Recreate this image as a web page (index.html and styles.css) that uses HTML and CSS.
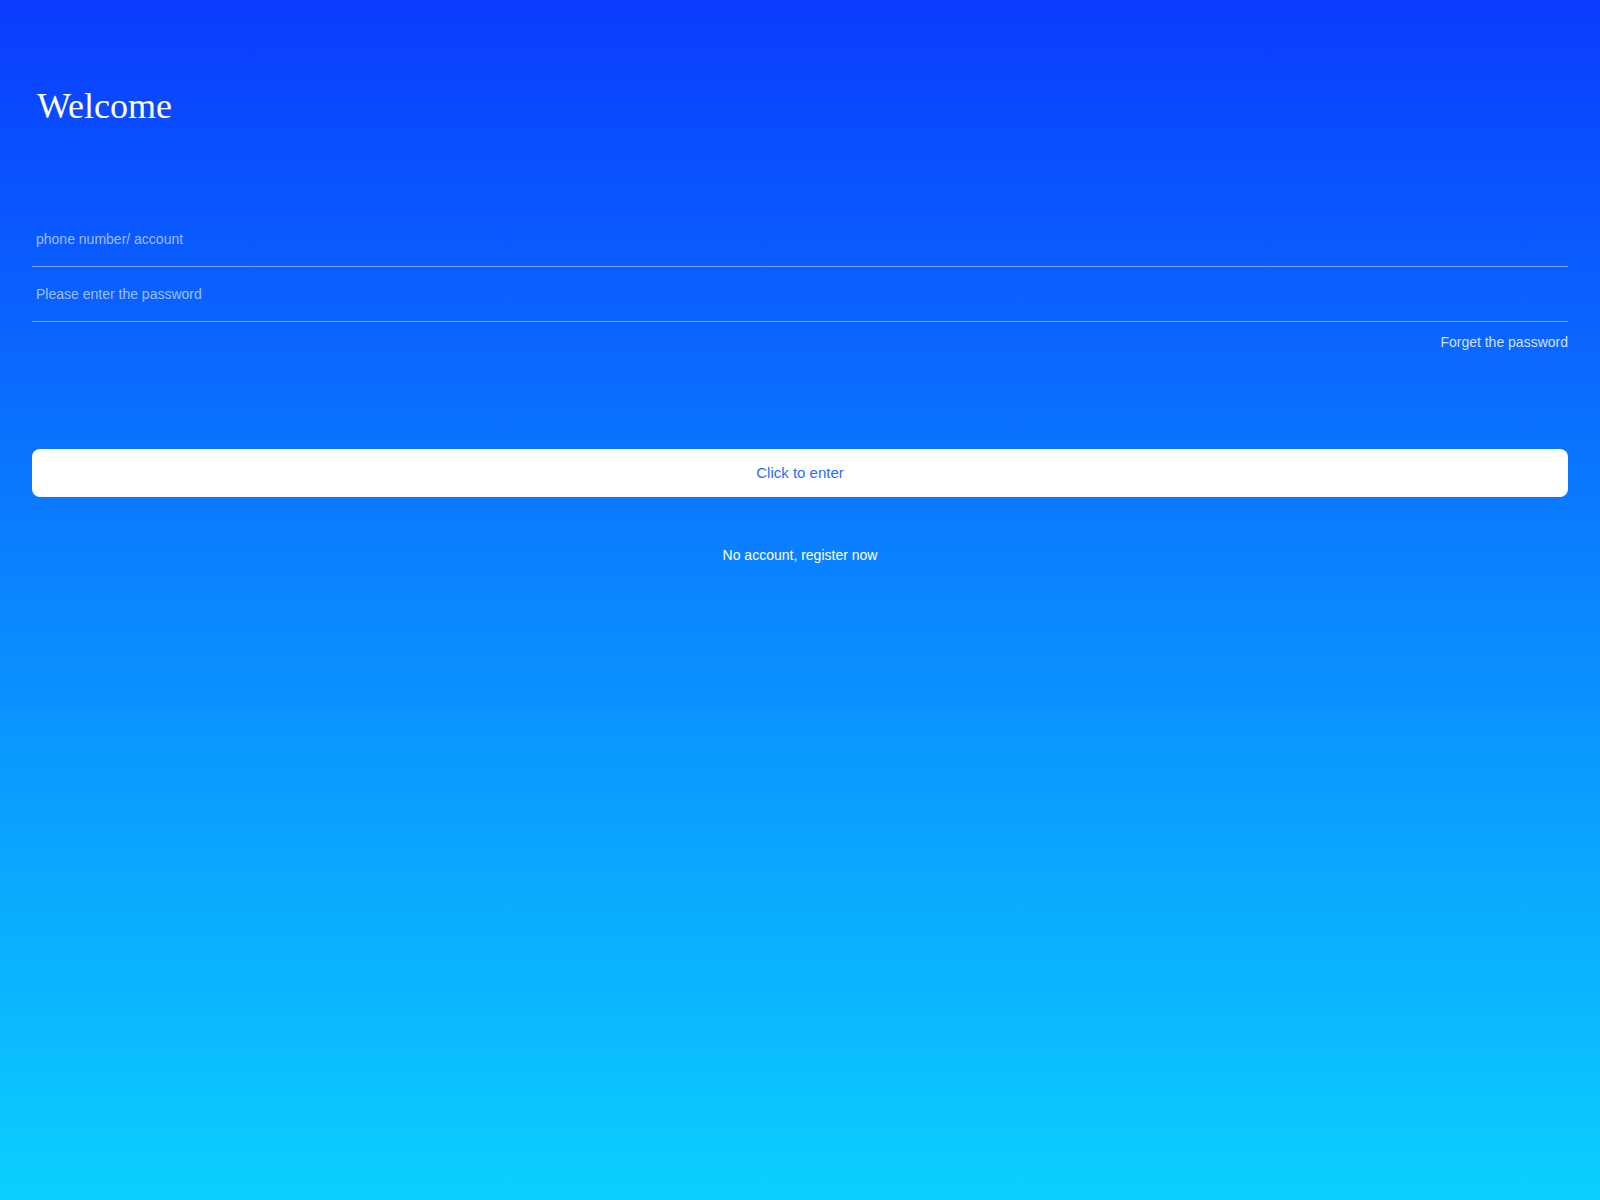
FILE: index.html
```html
<!DOCTYPE html>
<html lang="en">
<head>
<meta charset="utf-8">
<title>Welcome</title>
<link rel="stylesheet" href="styles.css">
</head>
<body>
<main class="page">
  <h1 class="title">Welcome</h1>
  <form class="form">
    <input class="field" type="text" placeholder="phone number/ account">
    <input class="field" type="password" placeholder="Please enter the password">
    <div class="forget-row"><a class="forget">Forget the password</a></div>
    <button class="enter" type="button">Click to enter</button>
    <div class="register"><a class="register-link">No account, register now</a></div>
  </form>
</main>
</body>
</html>
```

FILE: styles.css
```css
html, body {
  margin: 0;
  padding: 0;
  height: 100%;
}
body {
  background: linear-gradient(180deg, #0a3cff 0%, #0bd0ff 100%);
  min-height: 1200px;
  font-family: "Liberation Sans", Arial, sans-serif;
  font-size: 14px;
}
.page {
  padding: 86px 32px 0;
}
.title {
  margin: 0;
  padding-left: 5px;
  font-family: "Liberation Serif", "Times New Roman", serif;
  font-weight: normal;
  font-size: 36px;
  line-height: 40px;
  color: #ffffff;
}
.form {
  display: flex;
  flex-direction: column;
  margin-top: 86px;
}
.field {
  display: block;
  box-sizing: border-box;
  width: 100%;
  height: 55px;
  margin: 0;
  padding: 0 4px;
  border: 0;
  border-bottom: 1px solid rgba(255, 255, 255, 0.45);
  background: transparent;
  outline: none;
  font-family: "Liberation Sans", Arial, sans-serif;
  font-size: 14px;
  color: #ffffff;
}
.field::placeholder {
  color: rgba(255, 255, 255, 0.6);
}
.forget-row {
  display: flex;
  justify-content: flex-end;
  margin-top: 10px;
}
.forget {
  font-size: 14px;
  line-height: 20px;
  color: rgba(255, 255, 255, 0.82);
}
.enter {
  display: block;
  box-sizing: border-box;
  width: 100%;
  height: 48px;
  margin-top: 97px;
  padding: 0 0 2px;
  border: 0;
  border-radius: 8px;
  background: #ffffff;
  color: #2a6cf8;
  font-family: "Liberation Sans", Arial, sans-serif;
  font-size: 15px;
  cursor: pointer;
}
.register {
  display: flex;
  justify-content: center;
  margin-top: 48px;
}
.register-link {
  font-size: 14px;
  line-height: 20px;
  color: #ffffff;
}
```
